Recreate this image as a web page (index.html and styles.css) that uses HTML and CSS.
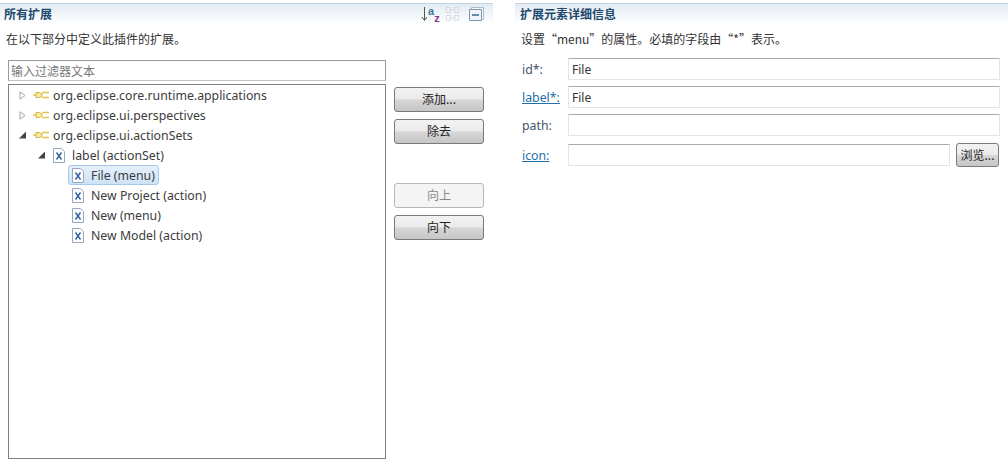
FILE: index.html
```html
<!DOCTYPE html>
<html lang="zh-CN">
<head>
    <meta charset="UTF-8">
    <meta name="viewport" content="width=device-width, initial-scale=1.0">
    <title>扩展</title>
    <link rel="stylesheet" href="styles.css">
</head>
<body>
    <svg class="defs">
        <defs>
            <symbol id="plug" viewBox="0 0 16 10">
                <path d="M0 5h4M9 2.500h7M9 7.500h7" stroke="#e0c64e" stroke-width="1.600" fill="none"/>
                <path d="M3 2.500h3l3 1.500v2L6 7.500H3z" fill="#fbeea0" stroke="#d2b244"/>
            </symbol>
            <symbol id="xfile" viewBox="0 0 12 15">
                <path d="M.5.5h8l3 3v11H.5z" fill="#fbfcfe" stroke="#98a8bc"/>
                <path d="M3.500 4.500l5 7M8.500 4.500l-5 7" stroke="#2f5a98" stroke-width="1.300" fill="none"/>
            </symbol>
            <symbol id="twist-closed" viewBox="0 0 7 9">
                <path d="M1 .8l5 3.700-5 3.700z" fill="#fff" stroke="#a6a6a6"/>
            </symbol>
        </defs>
    </svg>

    <section class="panel left-panel">
        <div class="panel-head">
            <h2>所有扩展</h2>
            <div class="head-tools">
                <div class="tool-sort">
                    <svg width="7" height="16" viewBox="0 0 7 16">
                        <path d="M3.500 1v13M1 11l2.500 3.500L6 11" stroke="#555" fill="none"/>
                    </svg>
                    <div class="sort-letters">
                        <span class="sort-a">a</span>
                        <span class="sort-z">z</span>
                    </div>
                </div>
                <svg class="tool-expand" width="15" height="16" viewBox="0 0 15 16">
                    <path d="M1.500 1.500h4v5h-4zM9.500 1.500h4v5h-4zM1.500 9.500h4v5h-4zM9.500 9.500h4v5h-4z" stroke="#ccd1d6" stroke-dasharray="2 1" fill="none"/>
                    <path d="M4 4h7M4 12h7" stroke="#d6dade" fill="none"/>
                </svg>
                <svg class="tool-collapse" width="15" height="16" viewBox="0 0 15 16">
                    <path d="M2.500 1.500h12v12h-12z" fill="#f6f9fc" stroke="#a9bccb"/>
                    <path d="M.5 3.500h12v11H.5z" fill="#eef4fa" stroke="#7f98ad"/>
                    <path d="M3 9h7" stroke="#3d6585" stroke-width="1.500"/>
                </svg>
            </div>
        </div>
        <p class="panel-desc">在以下部分中定义此插件的扩展。</p>
        <div class="left-body">
            <div class="tree-col">
                <input class="filter" type="text" placeholder="输入过滤器文本">
                <div class="tree">
                    <div class="row">
                        <svg class="twist"><use href="#twist-closed"/></svg>
                        <svg class="plug"><use href="#plug"/></svg>
                        <span class="name">org.eclipse.core.runtime.applications</span>
                    </div>
                    <div class="row">
                        <svg class="twist"><use href="#twist-closed"/></svg>
                        <svg class="plug"><use href="#plug"/></svg>
                        <span class="name">org.eclipse.ui.perspectives</span>
                    </div>
                    <div class="row">
                        <span class="twist open"></span>
                        <svg class="plug"><use href="#plug"/></svg>
                        <span class="name">org.eclipse.ui.actionSets</span>
                    </div>
                    <div class="row level-1">
                        <span class="twist open"></span>
                        <svg class="xfile"><use href="#xfile"/></svg>
                        <span class="name">label (actionSet)</span>
                    </div>
                    <div class="row level-2">
                        <span class="selected">
                            <svg class="xfile"><use href="#xfile"/></svg>
                            <span class="name">File (menu)</span>
                        </span>
                    </div>
                    <div class="row level-2">
                        <svg class="xfile"><use href="#xfile"/></svg>
                        <span class="name">New Project (action)</span>
                    </div>
                    <div class="row level-2">
                        <svg class="xfile"><use href="#xfile"/></svg>
                        <span class="name">New (menu)</span>
                    </div>
                    <div class="row level-2">
                        <svg class="xfile"><use href="#xfile"/></svg>
                        <span class="name">New Model (action)</span>
                    </div>
                </div>
            </div>
            <div class="btn-col">
                <button class="btn">添加...</button>
                <button class="btn">除去</button>
                <button class="btn gap-top" disabled>向上</button>
                <button class="btn">向下</button>
            </div>
        </div>
    </section>

    <section class="panel right-panel">
        <div class="panel-head">
            <h2>扩展元素详细信息</h2>
        </div>
        <p class="panel-desc">设置“menu”的属性。必填的字段由“*”表示。</p>
        <div class="form">
            <label>id*:</label>
            <input class="field" type="text" value="File">
            <a href="#">label*:</a>
            <input class="field" type="text" value="File">
            <label>path:</label>
            <input class="field" type="text">
            <a class="last" href="#">icon:</a>
            <div class="browse-row last">
                <input class="field" type="text">
                <button class="btn browse">浏览...</button>
            </div>
        </div>
    </section>
</body>
</html>
```

FILE: styles.css
```css
* {
    box-sizing: border-box;
}
body {
    margin: 0;
    height: 473px;
    display: flex;
    gap: 22px;
    overflow: hidden;
    background-color: #fff;
    color: #333;
    font-family: "Noto Sans", "Noto Sans CJK SC", sans-serif;
    font-size: 12.3px;
}
.defs {
    display: none;
}
.panel {
    width: 493px;
    padding-top: 3px;
}
.panel-head {
    height: 21px;
    display: flex;
    align-items: center;
    justify-content: space-between;
    padding-left: 4px;
    border-top: 1px solid #c5d3de;
    background: linear-gradient(#e3ebf3, #fff);
}
.right-panel .panel-head {
    padding-left: 5px;
}
.panel-head h2 {
    margin: 0;
    font-size: 12px;
    font-weight: bold;
    color: #1f4a6e;
}
.head-tools {
    display: flex;
    align-items: center;
    margin-right: 9px;
}
.tool-sort {
    width: 20px;
    display: flex;
    align-items: center;
}
.sort-letters {
    display: flex;
    font: bold 11px/12px "Liberation Sans", sans-serif;
}
.sort-a {
    margin-top: 1px;
    color: #3a7a96;
}
.sort-z {
    margin-top: 8px;
    color: #8a2f7e;
}
.tool-expand {
    margin-left: 4px;
}
.tool-collapse {
    margin-left: 9px;
}
.panel-desc {
    margin: 6px 0 0;
    height: 18px;
    line-height: 18px;
    padding-left: 6px;
    font-family: "Noto Sans CJK SC", sans-serif;
    font-size: 12px;
}
.left-body {
    display: flex;
    gap: 8px;
    padding: 12px 0 0 8px;
}
.tree-col {
    width: 378px;
}
.filter {
    display: block;
    width: 100%;
    height: 21px;
    padding: 0 2px;
    border: 1px solid #9a9a9a;
    border-bottom-color: #c4c4c4;
    font: 12px "Noto Sans CJK SC", sans-serif;
    outline: none;
}
.filter::placeholder {
    color: #777;
}
.tree {
    height: 375px;
    margin-top: 3px;
    border: 1px solid #808080;
}
.row {
    height: 20px;
    display: flex;
    align-items: center;
    padding-left: 10px;
    white-space: nowrap;
    color: #3c3c3c;
}
.level-1 {
    padding-left: 29px;
}
.level-2 {
    padding-left: 59px;
}
.twist {
    width: 7px;
    height: 9px;
    margin-right: 7px;
    flex: none;
}
.twist.open {
    height: 7px;
    background: #444;
    clip-path: polygon(100% 0, 100% 100%, 0 100%);
}
.plug {
    width: 16px;
    height: 10px;
    margin-right: 4px;
}
.level-1 .twist {
    margin-right: 8px;
}
.xfile {
    width: 12px;
    height: 15px;
    margin-right: 7px;
    flex: none;
}
.level-2 .xfile {
    margin-left: 4px;
}
.selected {
    display: flex;
    align-items: center;
    height: 20px;
    padding-right: 3px;
    border: 1px solid #a8c8e8;
    border-radius: 3px;
    background: linear-gradient(#e4f0fb, #cfe3f7);
}
.selected .xfile {
    margin-left: 3px;
}
.btn-col {
    display: flex;
    flex-direction: column;
    width: 90px;
    padding-top: 27px;
    gap: 7px;
}
.btn {
    height: 25px;
    padding: 0 0 2px;
    border: 1px solid #7a7a7a;
    border-radius: 3px;
    background: linear-gradient(#f2f2f2 0%, #ebebeb 48%, #d6d6d6 52%, #c6c6c6 100%);
    color: #222;
    font: 12px "Noto Sans CJK SC", sans-serif;
}
.btn.gap-top {
    margin-top: 32px;
}
.btn:disabled {
    border-color: #b8b8b8;
    background: #f4f4f4;
    color: #8a8a8a;
}
.form {
    display: grid;
    grid-template-columns: 46px 432px;
    grid-template-rows: 22px 22px 22px 24px;
    row-gap: 6px;
    align-items: center;
    padding: 10px 0 0 7px;
    color: #44546a;
}
.form a {
    color: #1f6fa8;
}
.form .last {
    margin-top: 2px;
}
.field {
    width: 100%;
    height: 22px;
    padding: 0 3px;
    border: 1px solid #e4e4e4;
    border-top-color: #ababab;
    color: #333;
    font: 12px "Noto Sans", sans-serif;
    outline: none;
}
.browse-row {
    display: flex;
    align-items: center;
    gap: 6px;
}
.browse-row .field {
    width: 382px;
    flex: none;
}
.browse {
    width: 43px;
    height: 24px;
}
```
